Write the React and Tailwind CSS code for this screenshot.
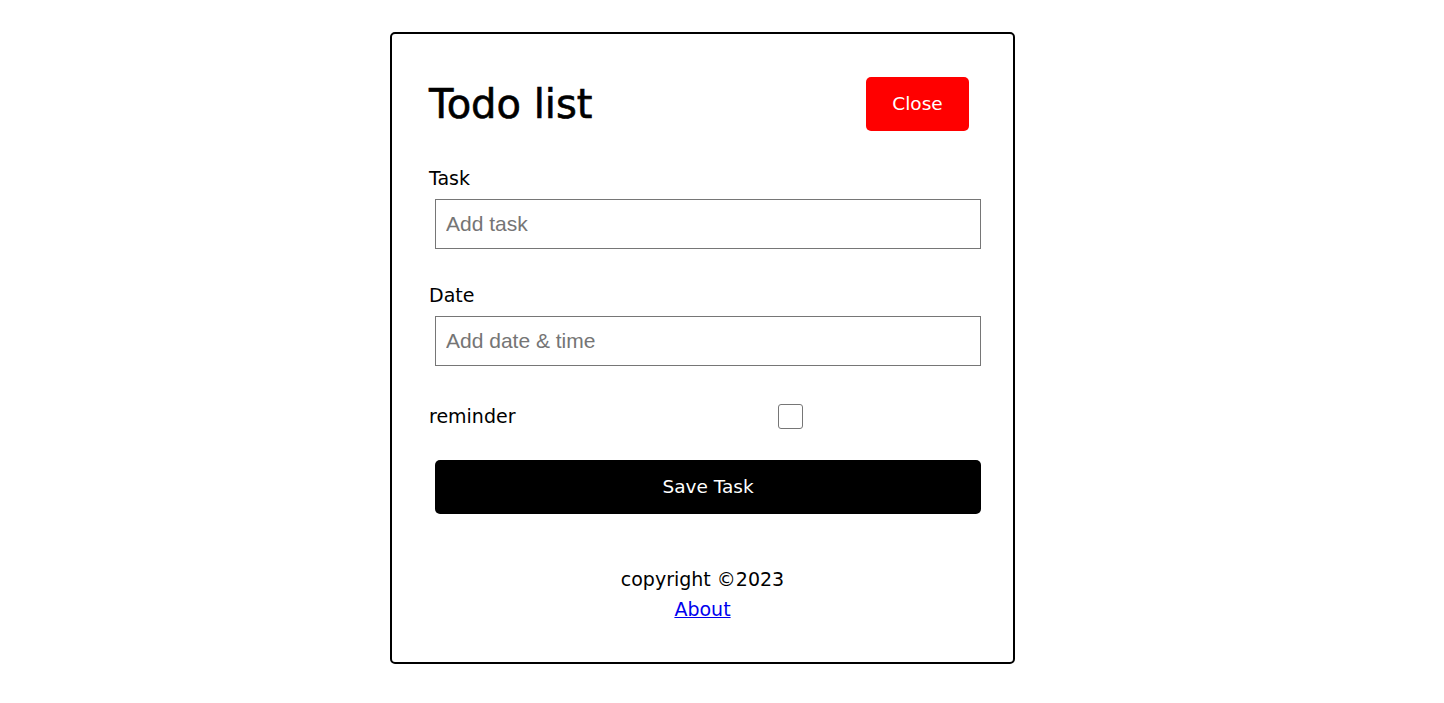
import { useState } from 'react';

const App = () => {
  const [task, setTask] = useState('');
  const [date, setDate] = useState('');
  const [reminder, setReminder] = useState(false);

  return (
    <div className="min-h-screen bg-white pt-[32px] pl-[390px] font-['DejaVu_Sans',sans-serif] text-black">
      <div className="w-[625px] h-[632px] rounded-[5px] border-2 border-black pl-[37px] pr-[32px] pt-[41px]">
        <div className="flex items-center justify-between pr-[12px]">
          <h1 className="text-[40px] font-medium leading-[58px] [-webkit-text-stroke:0.6px_black]">Todo list</h1>
          <button className="h-[54px] w-[103px] rounded-[5px] bg-[#ff0000] text-[18.5px] text-white">Close</button>
        </div>

        <form className="mt-[31px]" onSubmit={(e) => e.preventDefault()}>
          <label className="block text-[19px] leading-[28px]">Task</label>
          <input
            type="text"
            value={task}
            onChange={(e) => setTask(e.target.value)}
            placeholder="Add task"
            className="mt-[7px] ml-[6px] block h-[50px] w-[546px] border border-[#767676] px-[10px] font-['Liberation_Sans',sans-serif] text-[21px] placeholder:text-[#757575]"
          />

          <label className="mt-[32px] block text-[19px] leading-[28px]">Date</label>
          <input
            type="text"
            value={date}
            onChange={(e) => setDate(e.target.value)}
            placeholder="Add date & time"
            className="mt-[7px] ml-[6px] block h-[50px] w-[546px] border border-[#767676] px-[10px] font-['Liberation_Sans',sans-serif] text-[21px] placeholder:text-[#757575]"
          />

          <div className="mt-[36px] flex items-center">
            <label className="w-[349px] text-[19px] leading-[28px]">reminder</label>
            <input
              type="checkbox"
              checked={reminder}
              onChange={(e) => setReminder(e.target.checked)}
              className="h-[25px] w-[25px] appearance-none rounded-[3px] border border-[#767676] bg-white checked:bg-blue-600"
            />
          </div>

          <button
            type="submit"
            className="mt-[30px] ml-[6px] block h-[54px] w-[546px] rounded-[5px] bg-black text-[18.5px] text-white"
          >
            Save Task
          </button>
        </form>

        <footer className="mt-[50px] text-center text-[19px] leading-[30px] pr-[5px]">
          <p>copyright ©2023</p>
          <a href="#" className="text-[#0000ee] underline">About</a>
        </footer>
      </div>
    </div>
  );
};

export default App;
